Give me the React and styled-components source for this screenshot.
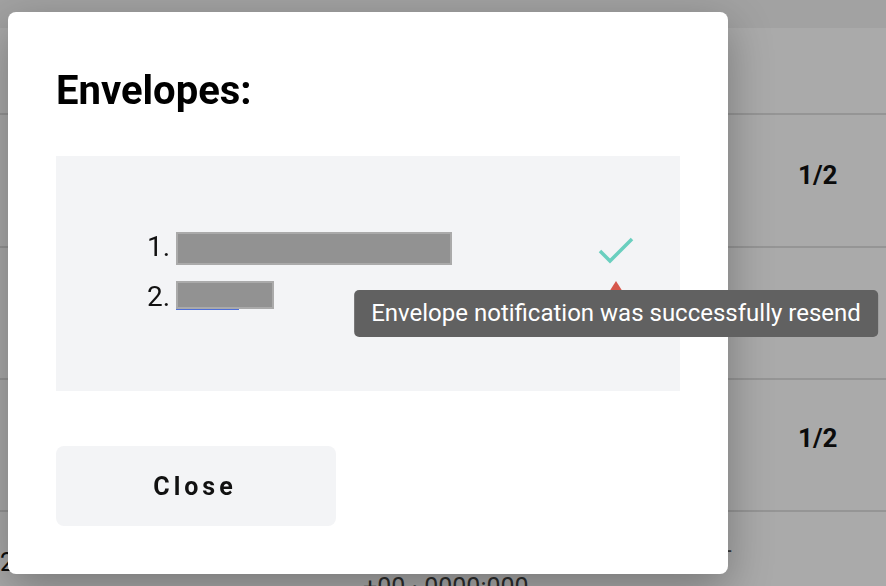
import React from "react";
import styled, { createGlobalStyle } from "styled-components";

const GlobalStyle = createGlobalStyle`
  html, body { margin: 0; padding: 0; }
  body {
    background: #ffffff;
    font-family: Roboto, "Liberation Sans", Arial, sans-serif;
    color: #111;
    overflow: hidden;
  }
  * { box-sizing: border-box; }
`;

/* ---------- background page ---------- */
const Page = styled.div`
  position: relative;
  width: 100%;
  height: 100vh;
  overflow: hidden;
  background: #ffffff;
`;

const Header = styled.div`
  height: 28px;
  background: #f3f3f3;
`;

const TableRow = styled.div`
  display: grid;
  grid-template-columns: 355px 370px 1fr;
  height: ${(p) => p.$h}px;
  border-bottom: 2px solid #e0e0e0;
`;

const Cell = styled.div`
  padding-top: ${(p) => p.$top || 0}px;
  padding-left: ${(p) => p.$left || 0}px;
  font-size: ${(p) => p.$size || 26}px;
  line-height: 30px;
  font-weight: ${(p) => (p.$bold ? 700 : 400)};
  color: ${(p) => p.$color || "#111"};
  white-space: nowrap;
`;

const Overlay = styled.div`
  position: fixed;
  inset: 0;
  background: rgba(0, 0, 0, 0.333);
`;

/* ---------- modal ---------- */
const Modal = styled.div`
  position: absolute;
  left: 8px;
  top: 12px;
  width: 720px;
  height: 562px;
  padding: 48px;
  background: #ffffff;
  border-radius: 8px;
  box-shadow: 0 14px 45px rgba(0, 0, 0, 0.3);
  display: flex;
  flex-direction: column;
  align-items: flex-start;
`;

const Title = styled.h2`
  margin: 0 0 34px;
  font-size: 40px;
  line-height: 62px;
  font-weight: 700;
  color: #000;
`;

const Panel = styled.div`
  width: 624px;
  height: 235px;
  background: #f3f4f6;
  padding: 66px 44px 0 91px;
`;

const List = styled.ol`
  margin: 0;
  padding: 0;
  list-style: none;
`;

const Item = styled.li`
  display: grid;
  grid-template-columns: 29px 1fr 40px;
  align-items: center;
  height: 50px;
`;

const Marker = styled.span`
  font-size: 28px;
  line-height: 50px;
  color: #111;
`;

const EnvelopeLink = styled.a`
  position: relative;
  justify-self: start;
  display: block;
  margin-top: ${(p) => p.$shift}px;
  &::after {
    content: "";
    position: absolute;
    left: 0;
    bottom: -1px;
    width: ${(p) => p.$underline}px;
    height: 2px;
    background: #4f6fd6;
  }
`;

const Redaction = styled.span`
  position: relative;
  z-index: 1;
  display: block;
  width: ${(p) => p.$w}px;
  height: ${(p) => p.$h}px;
  background: #929292;
  border: 2px solid #aaaaaa;
`;

const Status = styled.span`
  position: relative;
  display: block;
  width: 40px;
  height: 36px;
  svg { display: block; }
`;

const Tooltip = styled.div`
  position: absolute;
  z-index: 5;
  top: 11px;
  left: 50%;
  transform: translateX(-50%);
  height: 47px;
  padding: 0 17px;
  background: #616161;
  color: #ffffff;
  border-radius: 5px;
  font-size: 24px;
  line-height: 47px;
  white-space: nowrap;
`;

const CloseButton = styled.button`
  margin-top: 55px;
  width: 280px;
  height: 80px;
  border: none;
  border-radius: 8px;
  background: #f3f4f6;
  font-family: Roboto, "Liberation Sans", Arial, sans-serif;
  font-size: 25px;
  font-weight: 700;
  letter-spacing: 4px;
  padding-left: 4px;
  color: #111;
  cursor: pointer;
`;

const CheckIcon = () => (
  <svg width="40" height="36" viewBox="0 0 40 36">
    <path d="M4 22 L14 32 L36 10" fill="none" stroke="#6acfbf" strokeWidth="3.5" />
  </svg>
);

const WarnIcon = () => (
  <svg width="40" height="36" viewBox="0 0 40 36">
    <path d="M20 2 L39 32 L1 32 Z" fill="#d6574c" />
  </svg>
);

export default function App() {
  return (
    <>
      <GlobalStyle />
      <Page>
        <Header />
        <TableRow $h={87} />
        <TableRow $h={133}>
          <Cell />
          <Cell />
          <Cell $top={45} $left={73} $bold>1/2</Cell>
        </TableRow>
        <TableRow $h={132} />
        <TableRow $h={132}>
          <Cell />
          <Cell />
          <Cell $top={43} $left={73} $bold>1/2</Cell>
        </TableRow>
        <TableRow $h={100}>
          <Cell $top={36} $size={25}>2</Cell>
          <Cell $top={61} $left={8} $size={25} $color="#444">+00 · 0000:000</Cell>
          <Cell $top={23} $size={24} $color="#555">-</Cell>
        </TableRow>
        <Overlay />
        <Modal>
          <Title>Envelopes:</Title>
          <Panel>
            <List>
              <Item>
                <Marker>1.</Marker>
                <EnvelopeLink href="#" $shift={3} $underline={0}>
                  <Redaction $w={276} $h={33} />
                </EnvelopeLink>
                <Status>
                  <CheckIcon />
                </Status>
              </Item>
              <Item>
                <Marker>2.</Marker>
                <EnvelopeLink href="#" $shift={-4} $underline={63}>
                  <Redaction $w={98} $h={28} />
                </EnvelopeLink>
                <Status>
                  <WarnIcon />
                  <Tooltip>Envelope notification was successfully resend</Tooltip>
                </Status>
              </Item>
            </List>
          </Panel>
          <CloseButton>Close</CloseButton>
        </Modal>
      </Page>
    </>
  );
}
